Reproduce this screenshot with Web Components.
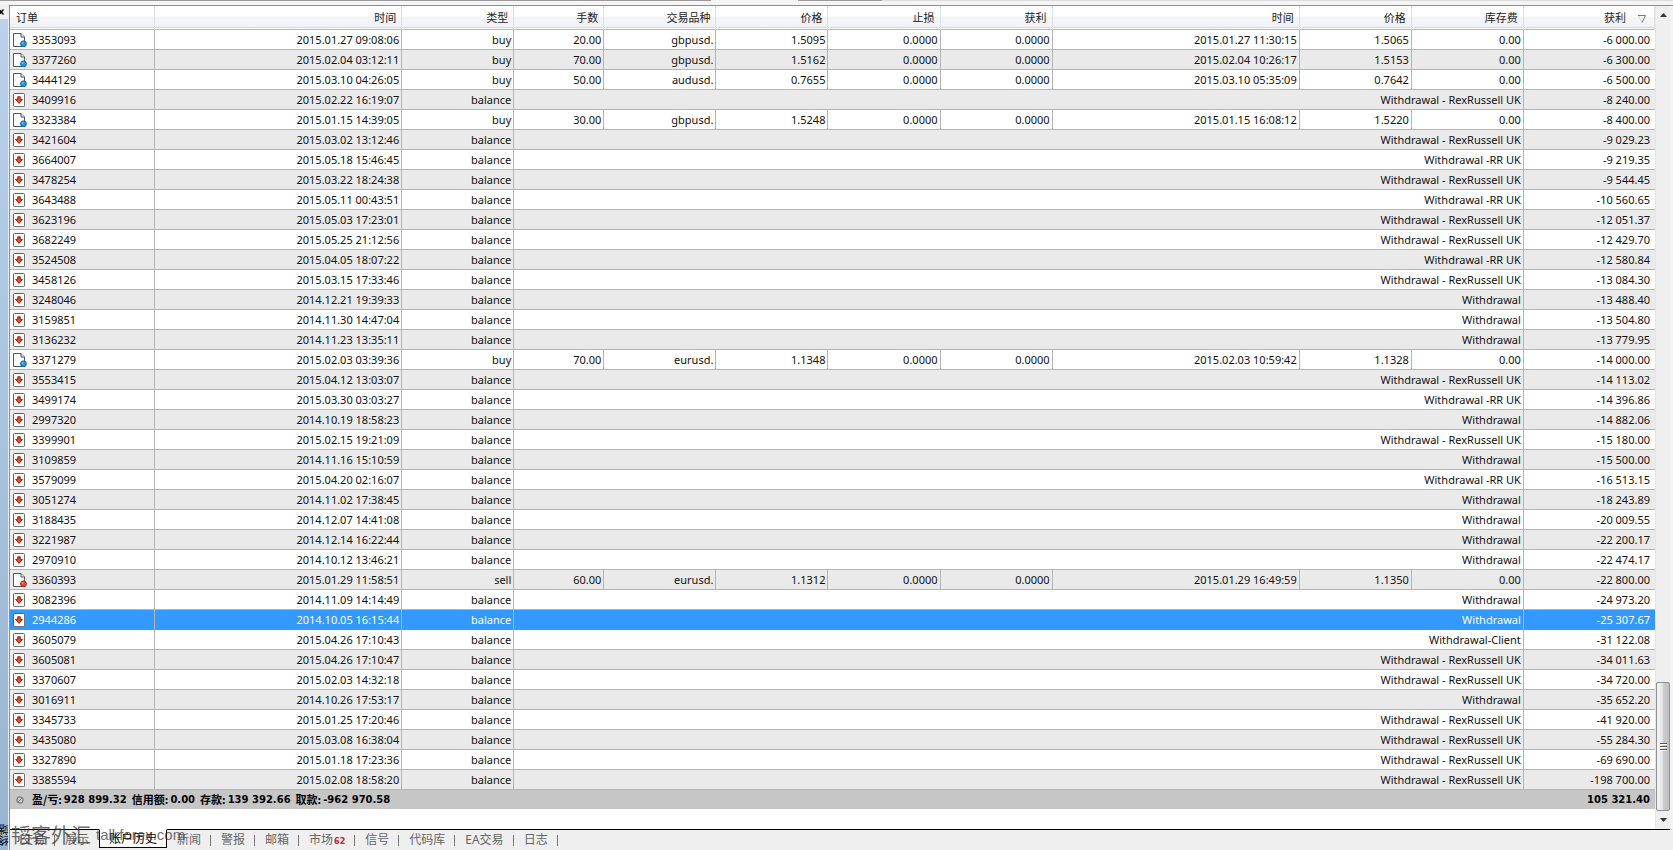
<!DOCTYPE html>
<html lang="zh-CN">
<head>
<meta charset="utf-8">
<title>账户历史</title>
<style>
html, body { margin: 0; height: 100%; }
body { font: 11px/19px "Noto Sans", "Noto Sans CJK SC", sans-serif; color: #111; background: #efefef; overflow: hidden; }
</style>
</head>
<body>
<terminal-window>
  <side-caption slot="side">终端</side-caption>
  <account-history></account-history>
  <scroll-track slot="scroll"></scroll-track>
  <terminal-tabs slot="tabs"></terminal-tabs>
  <site-watermark slot="mark"></site-watermark>
</terminal-window>

<script>
class TerminalWindow extends HTMLElement {
  constructor() {
    super();
    this.attachShadow({ mode: 'open' }).innerHTML = `
      <style>
        :host { display: flex; flex-direction: column; min-height: 100vh; position: relative; overflow: hidden; }
        .top { height: 5px; flex: none; background: linear-gradient(90deg, #9d9a9d 42.5%, #f4f4f4 42.5% 47.7%, #9d9a9d 47.7% 52.7%, #dcdcdc 52.7%) top / 100% 1px no-repeat #f4f4f4; }
        .body { flex: 1; display: flex; min-height: 0; }
        .pane { flex: 1; min-width: 0; display: flex; flex-direction: column; border-left: 1px solid #8d8d92; }
        .client { flex: 1; display: flex; border-top: 1px solid #8d8d92; background: #fff; }
        .content { flex: 1; min-width: 0; }
        .edge { width: 3px; flex: none; background: #f4f4f4; }
      </style>
      <div class="top"></div>
      <div class="body">
        <slot name="side"></slot>
        <div class="pane">
          <div class="client"><div class="content"><slot></slot></div><slot name="scroll"></slot><div class="edge"></div></div>
          <slot name="tabs"></slot>
        </div>
      </div>
      <slot name="mark"></slot>`;
  }
}

class SideCaption extends HTMLElement {
  constructor() {
    super();
    this.attachShadow({ mode: 'open' }).innerHTML = `
      <style>
        :host { display: flex; flex-direction: column; width: 9px; overflow: hidden; flex: none; background: #f1f1f1; }
        button { width: 9px; height: 14px; padding: 0; border: 0; background: none; flex: none; display: flex; align-items: center; }
        .bar { flex: 1; display: flex; flex-direction: column; justify-content: flex-end; align-items: flex-end;
          background: linear-gradient(#b9d1ea, #99b4d1); border-right: 1px solid #e4ecf5; padding-bottom: 4px; }
        .bar span { writing-mode: vertical-rl; transform: rotate(180deg); font-size: 11px; line-height: 8px; color: #000; }
      </style>
      <button type="button" aria-label="关闭"><svg width="6" height="6" viewBox="0 0 6 6"><path d="M-1 0.5 L3.5 5.5 M3.5 0.5 L-1 5.5" stroke="#000" stroke-width="1.5"/></svg></button>
      <div class="bar"><span><slot></slot></span></div>`;
  }
}

class OrderIcon extends HTMLElement {
  connectedCallback() {
    const kind = this.getAttribute('kind');
    const doc = (light, dark) => `
      <path d="M.5 .5H8L11.500 4V13.500H.5Z" fill="#fff" stroke="#4c5866"/>
      <path d="M8 .5V4H11.500" fill="#e4e8ee" stroke="#4c5866"/>
      <circle cx="10.500" cy="10.800" r="2.900" fill="${light}" stroke="${dark}" stroke-width="1"/>
      <circle cx="9.600" cy="9.900" r=".9" fill="#fff" opacity=".45"/>`;
    const art = {
      buy: doc('#1f9be0', '#0b67a5'),
      sell: doc('#ea4a22', '#a62a10'),
      balance: `
      <rect x=".5" y=".5" width="11" height="13" rx="1" fill="#fdfdfd" stroke="#5d5d5d"/>
      <path d="M1.500 13.500H11.500V2" fill="none" stroke="#8a8a8a" opacity=".5"/>
      <path d="M4.700 3.800H7.300V6.400H9.400L6 10.400L2.600 6.400H4.700Z" fill="#ee4a20" stroke="#8e1c08" stroke-width=".9"/>`,
      total: `<circle cx="7" cy="7" r="3.200" fill="#c6c6c6" stroke="#666"/><path d="M5 9L9 5" stroke="#777" stroke-width=".8"/>`
    }[kind];
    if (!this.shadowRoot) this.attachShadow({ mode: 'open' });
    this.shadowRoot.innerHTML = `
      <style>:host { display: inline-block; width: 14px; height: 15px; } svg { display: block; }</style>
      <svg width="14" height="15" viewBox="0 -1 14 15" aria-hidden="true">${art}</svg>`;
  }
}

const RR = 'Withdrawal - RexRussell UK', R2 = 'Withdrawal -RR UK', W = 'Withdrawal';
const ROWS = [
  ['3353093', '2015.01.27 09:08:06', 'buy', '20.00', 'gbpusd.', '1.5095', '2015.01.27 11:30:15', '1.5065', '-6 000.00'],
  ['3377260', '2015.02.04 03:12:11', 'buy', '70.00', 'gbpusd.', '1.5162', '2015.02.04 10:26:17', '1.5153', '-6 300.00'],
  ['3444129', '2015.03.10 04:26:05', 'buy', '50.00', 'audusd.', '0.7655', '2015.03.10 05:35:09', '0.7642', '-6 500.00'],
  ['3409916', '2015.02.22 16:19:07', RR, '-8 240.00'],
  ['3323384', '2015.01.15 14:39:05', 'buy', '30.00', 'gbpusd.', '1.5248', '2015.01.15 16:08:12', '1.5220', '-8 400.00'],
  ['3421604', '2015.03.02 13:12:46', RR, '-9 029.23'],
  ['3664007', '2015.05.18 15:46:45', R2, '-9 219.35'],
  ['3478254', '2015.03.22 18:24:38', RR, '-9 544.45'],
  ['3643488', '2015.05.11 00:43:51', R2, '-10 560.65'],
  ['3623196', '2015.05.03 17:23:01', RR, '-12 051.37'],
  ['3682249', '2015.05.25 21:12:56', RR, '-12 429.70'],
  ['3524508', '2015.04.05 18:07:22', R2, '-12 580.84'],
  ['3458126', '2015.03.15 17:33:46', RR, '-13 084.30'],
  ['3248046', '2014.12.21 19:39:33', W, '-13 488.40'],
  ['3159851', '2014.11.30 14:47:04', W, '-13 504.80'],
  ['3136232', '2014.11.23 13:35:11', W, '-13 779.95'],
  ['3371279', '2015.02.03 03:39:36', 'buy', '70.00', 'eurusd.', '1.1348', '2015.02.03 10:59:42', '1.1328', '-14 000.00'],
  ['3553415', '2015.04.12 13:03:07', RR, '-14 113.02'],
  ['3499174', '2015.03.30 03:03:27', R2, '-14 396.86'],
  ['2997320', '2014.10.19 18:58:23', W, '-14 882.06'],
  ['3399901', '2015.02.15 19:21:09', RR, '-15 180.00'],
  ['3109859', '2014.11.16 15:10:59', W, '-15 500.00'],
  ['3579099', '2015.04.20 02:16:07', R2, '-16 513.15'],
  ['3051274', '2014.11.02 17:38:45', W, '-18 243.89'],
  ['3188435', '2014.12.07 14:41:08', W, '-20 009.55'],
  ['3221987', '2014.12.14 16:22:44', W, '-22 200.17'],
  ['2970910', '2014.10.12 13:46:21', W, '-22 474.17'],
  ['3360393', '2015.01.29 11:58:51', 'sell', '60.00', 'eurusd.', '1.1312', '2015.01.29 16:49:59', '1.1350', '-22 800.00'],
  ['3082396', '2014.11.09 14:14:49', W, '-24 973.20'],
  ['2944286', '2014.10.05 16:15:44', W, '-25 307.67'],
  ['3605079', '2015.04.26 17:10:43', 'Withdrawal-Client', '-31 122.08'],
  ['3605081', '2015.04.26 17:10:47', RR, '-34 011.63'],
  ['3370607', '2015.02.03 14:32:18', RR, '-34 720.00'],
  ['3016911', '2014.10.26 17:53:17', W, '-35 652.20'],
  ['3345733', '2015.01.25 17:20:46', RR, '-41 920.00'],
  ['3435080', '2015.03.08 16:38:04', RR, '-55 284.30'],
  ['3327890', '2015.01.18 17:23:36', RR, '-69 690.00'],
  ['3385594', '2015.02.08 18:58:20', RR, '-198 700.00']
];
const SELECTED = '2944286';

class AccountHistory extends HTMLElement {
  constructor() {
    super();
    const heads = ['订单', '时间', '类型', '手数', '交易品种', '价格', '止损', '获利', '时间', '价格', '库存费', '获利'];
    const widths = [145, 247, 112, 90, 112, 112, 112, 112, 247, 112, 112, 131];
    const totals = [['盈/亏:', '928 899.32'], ['信用额:', '0.00'], ['存款:', '139 392.66'], ['取款:', '-962 970.58']];
    const td = (v, attrs = '') => `<td${attrs}>${v}</td>`;
    const row = r => {
      const deal = r.length > 4;
      const kind = deal ? r[2] : 'balance';
      const first = td(`<div class="id"><order-icon kind="${kind}"></order-icon>${r[0]}</div>`);
      const cells = deal
        ? [r[1], r[2], r[3], r[4], r[5], '0.0000', '0.0000', r[6], r[7], '0.00', r[8]].map(v => td(v)).join('')
        : td(r[1]) + td('balance') + td(r[2], ' colspan="8"') + td(r[3]);
      return `<tr${r[0] === SELECTED ? ' class="selected"' : ''}>${first}${cells}</tr>`;
    };
    this.attachShadow({ mode: 'open' }).innerHTML = `
      <style>
        :host { display: block; }
        table { width: 100%; table-layout: fixed; border-collapse: separate; border-spacing: 0; }
        th, td { padding: 0 2px; text-align: right; white-space: nowrap; border: 0 solid #b4b4b4; overflow: hidden; }
        th { height: 23px; padding: 0 5px; font-weight: normal; color: #222; border-color: #dcdfe4; border-right-width: 1px;
          border-bottom: 1px solid #b9b9b9; background: linear-gradient(#fff 45%, #f3f5f8 46%, #f1f3f6 92%, #d5d5d5 93%, #fff 98%); }
        th:first-child { text-align: left; padding-left: 6px; }
        th svg { margin-left: 12px; vertical-align: -1px; }
        th:last-child { padding-right: 8px; }
        td { height: 19px; border-width: 0 1px 1px 0; }
        td:last-child { border-right: 0; padding-right: 5px; }
        tbody tr:nth-child(even) { background: #eaeaea; }
        tbody tr.selected { background: #3399ff; color: #fff; }
        tr.selected td { border-bottom-color: #3399ff; }
        .id { display: flex; align-items: center; gap: 5px; padding-left: 1px; }
        .id order-icon { flex: none; }
        tfoot td { background: #c6c6c6; border: 0; text-align: right; color: #000; font: bold 10px/19px "DejaVu Sans", "Noto Sans CJK SC", sans-serif; }
        tfoot td:first-child { text-align: left; }
        dl { display: flex; gap: 5px; margin: 0; }
        dl div { display: flex; gap: 2px; }
        dd { margin: 0; }
        dt { font-size: 11px; font-family: "Noto Sans CJK SC", sans-serif; }
      </style>
      <table>
        <colgroup>${widths.map(w => `<col style="width:${w}px">`).join('')}</colgroup>
        <thead><tr>${heads.map((h, i) => `<th scope="col">${h}${i === 11 ? '<svg width="8" height="8" viewBox="0 0 8 8"><path d="M0 .5H7.500L4 7.500" fill="none" stroke="#777"/><path d="M.5 1L4 7.500" stroke="#ccc" stroke-width=".7"/></svg>' : ''}</th>`).join('')}</tr></thead>
        <tbody>${ROWS.map(row).join('')}</tbody>
        <tfoot><tr><td colspan="11"><div class="id"><order-icon kind="total"></order-icon><dl>${totals.map(([k, v]) => `<div><dt>${k}</dt><dd>${v}</dd></div>`).join('')}</dl></div></td><td>105 321.40</td></tr></tfoot>
      </table>`;
  }
}

class ScrollTrack extends HTMLElement {
  constructor() {
    super();
    this.attachShadow({ mode: 'open' }).innerHTML = `
      <style>
        :host { display: flex; flex-direction: column; width: 15px; flex: none; background: #efefef; border-left: 1px solid #e6e6e6; box-sizing: border-box; }
        button { height: 18px; width: 100%; padding: 0; border: 0; background: none; display: flex; align-items: center; justify-content: center; flex: none; }
        .space { flex: 660; }
        .thumb { flex: 127; box-sizing: border-box; border: 1px solid #8f9094; border-radius: 2px; background: linear-gradient(90deg, #f6f6f6, #e6e6e8 45%, #c9cace 55%, #bfc0c5);
          display: flex; align-items: center; justify-content: center; }
      </style>
      <button type="button" aria-label="向上"><svg width="7" height="4" viewBox="0 0 7 4"><path d="M0 4L3.500 0L7 4Z" fill="#333"/></svg></button>
      <div class="space"></div>
      <div class="thumb"><svg width="7" height="8" viewBox="0 0 7 8"><path d="M0 .5H7M0 3.500H7M0 6.500H7" stroke="#555"/><path d="M0 1.500H7M0 4.500H7M0 7.500H7" stroke="#fff"/></svg></div>
      <button type="button" aria-label="向下"><svg width="7" height="4" viewBox="0 0 7 4"><path d="M0 0L3.500 4L7 0Z" fill="#333"/></svg></button>`;
  }
}

class TerminalTabs extends HTMLElement {
  constructor() {
    super();
    const tabs = ['交易', '展示', '账户历史', '新闻', '警报', '邮箱', '市场', '信号', '代码库', 'EA交易', '日志'];
    this.attachShadow({ mode: 'open' }).innerHTML = `
      <style>
        :host { display: flex; height: 21px; flex: none; background: #efefef; }
        .lead, .rest { border-top: 1px solid #000; }
        .lead { width: 1px; }
        .rest { flex: 1; margin-right: 3px; }
        button { font: 12px/16px "Noto Sans", "Noto Sans CJK SC", sans-serif; color: #666; background: none; border: 0; border-top: 1px solid #000;
          padding: 0 10px; height: 21px; display: flex; align-items: center; position: relative; margin: 0; }
        button:not(.before)::after { content: ""; position: absolute; right: 0; top: 5px; width: 1px; height: 11px; background: #777; }
        button.on { height: 19px; background: #fff; color: #000; border: 1px solid #000; border-top-color: #fff; padding: 0 9px; }
        button.on::after { display: none; }
        small { font: bold 8px/12px "DejaVu Sans", sans-serif; color: #d0202c; margin: 4px 0 0 1px; }
      </style>
      <div class="lead"></div>
      ${tabs.map((t, i) => `<button type="button" class="${i === 2 ? 'on' : i === 1 ? 'before' : ''}">${t}${t === '市场' ? '<small>62</small>' : ''}</button>`).join('')}
      <div class="rest"></div>`;
  }
}

class SiteWatermark extends HTMLElement {
  constructor() {
    super();
    this.attachShadow({ mode: 'open' }).innerHTML = `
      <style>
        :host { position: absolute; left: 11px; bottom: 4px; display: flex; align-items: center; gap: 5px; color: #333; opacity: .7; pointer-events: none; white-space: nowrap; }
        .cn { font: 20px/22px "Noto Sans CJK SC", sans-serif; }
        .en { font: 15px/18px "Liberation Sans", sans-serif; }
      </style>
      <span class="cn">韬客外汇</span><span class="en">talkforex.com</span>`;
  }
}

customElements.define('order-icon', OrderIcon);
customElements.define('terminal-window', TerminalWindow);
customElements.define('side-caption', SideCaption);
customElements.define('account-history', AccountHistory);
customElements.define('scroll-track', ScrollTrack);
customElements.define('terminal-tabs', TerminalTabs);
customElements.define('site-watermark', SiteWatermark);
</script>
</body>
</html>
